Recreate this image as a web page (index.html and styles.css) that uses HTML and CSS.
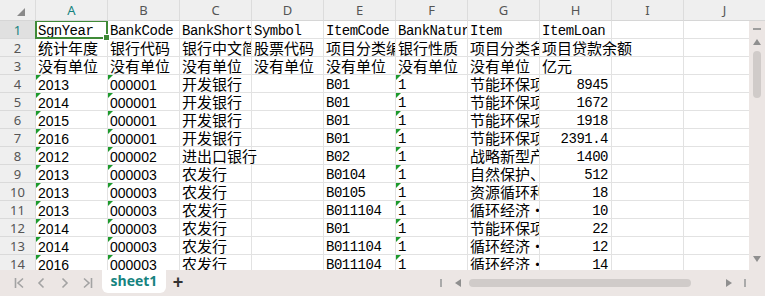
FILE: index.html
```html
<!DOCTYPE html>
<html>
<head>
    <title>sheet1</title>
    <link rel="stylesheet" href="styles.css">
</head>
<body>
<div class="book">
    <div class="colhead">
        <div class="corner"><svg width="8" height="8" viewBox="0 0 8 8"><polygon points="8,0 8,8 0,8" fill="#8a8a8a"/></svg></div>
        <div class="ch sel">A</div>
        <div class="ch">B</div>
        <div class="ch">C</div>
        <div class="ch">D</div>
        <div class="ch">E</div>
        <div class="ch">F</div>
        <div class="ch">G</div>
        <div class="ch">H</div>
        <div class="ch">I</div>
        <div class="ch">J</div>
    </div>

    <div class="body">
        <div class="grid">
            <div class="row">
                <div class="rh sel">1</div>
                <div class="c m active">SgnYear</div>
                <div class="c m">BankCode</div>
                <div class="c m">BankShort</div>
                <div class="c m">Symbol</div>
                <div class="c m">ItemCode</div>
                <div class="c m">BankNature</div>
                <div class="c m">Item</div>
                <div class="c m">ItemLoan</div>
                <div class="c"></div>
                <div class="c"></div>
            </div>
            <div class="row">
                <div class="rh">2</div>
                <div class="c">统计年度</div>
                <div class="c">银行代码</div>
                <div class="c">银行中文简称</div>
                <div class="c">股票代码</div>
                <div class="c">项目分类编号</div>
                <div class="c">银行性质</div>
                <div class="c">项目分类名称</div>
                <div class="c spill">项目贷款余额</div>
                <div class="c"></div>
                <div class="c"></div>
            </div>
            <div class="row">
                <div class="rh">3</div>
                <div class="c">没有单位</div>
                <div class="c">没有单位</div>
                <div class="c">没有单位</div>
                <div class="c">没有单位</div>
                <div class="c">没有单位</div>
                <div class="c">没有单位</div>
                <div class="c">没有单位</div>
                <div class="c">亿元</div>
                <div class="c"></div>
                <div class="c"></div>
            </div>
            <div class="row">
                <div class="rh">4</div>
                <div class="c t">2013</div>
                <div class="c t">000001</div>
                <div class="c">开发银行</div>
                <div class="c"></div>
                <div class="c m">B01</div>
                <div class="c m tri">1</div>
                <div class="c">节能环保项目</div>
                <div class="c m n">8945</div>
                <div class="c"></div>
                <div class="c"></div>
            </div>
            <div class="row">
                <div class="rh">5</div>
                <div class="c t">2014</div>
                <div class="c t">000001</div>
                <div class="c">开发银行</div>
                <div class="c"></div>
                <div class="c m">B01</div>
                <div class="c m tri">1</div>
                <div class="c">节能环保项目</div>
                <div class="c m n">1672</div>
                <div class="c"></div>
                <div class="c"></div>
            </div>
            <div class="row">
                <div class="rh">6</div>
                <div class="c t">2015</div>
                <div class="c t">000001</div>
                <div class="c">开发银行</div>
                <div class="c"></div>
                <div class="c m">B01</div>
                <div class="c m tri">1</div>
                <div class="c">节能环保项目</div>
                <div class="c m n">1918</div>
                <div class="c"></div>
                <div class="c"></div>
            </div>
            <div class="row">
                <div class="rh">7</div>
                <div class="c t">2016</div>
                <div class="c t">000001</div>
                <div class="c">开发银行</div>
                <div class="c"></div>
                <div class="c m">B01</div>
                <div class="c m tri">1</div>
                <div class="c">节能环保项目</div>
                <div class="c m n">2391.4</div>
                <div class="c"></div>
                <div class="c"></div>
            </div>
            <div class="row">
                <div class="rh">8</div>
                <div class="c t">2012</div>
                <div class="c t">000002</div>
                <div class="c spill">进出口银行</div>
                <div class="c"></div>
                <div class="c m">B02</div>
                <div class="c m tri">1</div>
                <div class="c">战略新型产业</div>
                <div class="c m n">1400</div>
                <div class="c"></div>
                <div class="c"></div>
            </div>
            <div class="row">
                <div class="rh">9</div>
                <div class="c t">2013</div>
                <div class="c t">000003</div>
                <div class="c">农发行</div>
                <div class="c"></div>
                <div class="c m">B0104</div>
                <div class="c m tri">1</div>
                <div class="c">自然保护、生态修复</div>
                <div class="c m n">512</div>
                <div class="c"></div>
                <div class="c"></div>
            </div>
            <div class="row">
                <div class="rh">10</div>
                <div class="c t">2013</div>
                <div class="c t">000003</div>
                <div class="c">农发行</div>
                <div class="c"></div>
                <div class="c m">B0105</div>
                <div class="c m tri">1</div>
                <div class="c">资源循环利用</div>
                <div class="c m n">18</div>
                <div class="c"></div>
                <div class="c"></div>
            </div>
            <div class="row">
                <div class="rh">11</div>
                <div class="c t">2013</div>
                <div class="c t">000003</div>
                <div class="c">农发行</div>
                <div class="c"></div>
                <div class="c m">B011104</div>
                <div class="c m tri">1</div>
                <div class="c">循环经济·工业</div>
                <div class="c m n">10</div>
                <div class="c"></div>
                <div class="c"></div>
            </div>
            <div class="row">
                <div class="rh">12</div>
                <div class="c t">2014</div>
                <div class="c t">000003</div>
                <div class="c">农发行</div>
                <div class="c"></div>
                <div class="c m">B01</div>
                <div class="c m tri">1</div>
                <div class="c">节能环保项目</div>
                <div class="c m n">22</div>
                <div class="c"></div>
                <div class="c"></div>
            </div>
            <div class="row">
                <div class="rh">13</div>
                <div class="c t">2014</div>
                <div class="c t">000003</div>
                <div class="c">农发行</div>
                <div class="c"></div>
                <div class="c m">B011104</div>
                <div class="c m tri">1</div>
                <div class="c">循环经济·工业</div>
                <div class="c m n">12</div>
                <div class="c"></div>
                <div class="c"></div>
            </div>
            <div class="row">
                <div class="rh">14</div>
                <div class="c t">2016</div>
                <div class="c t">000003</div>
                <div class="c">农发行</div>
                <div class="c"></div>
                <div class="c m">B011104</div>
                <div class="c m tri">1</div>
                <div class="c">循环经济·工业</div>
                <div class="c m n">14</div>
                <div class="c"></div>
                <div class="c"></div>
            </div>
        </div>

        <div class="vscroll">
            <div class="vdash"></div>
            <svg class="varrow" width="8" height="6" viewBox="0 0 8 6"><polygon points="4,0 8,6 0,6" fill="#8f8f8f"/></svg>
            <div class="vthumb"></div>
            <svg class="varrow down" width="8" height="6" viewBox="0 0 8 6"><polygon points="0,0 8,0 4,6" fill="#8f8f8f"/></svg>
        </div>
    </div>

    <div class="tabbar">
        <div class="nav">
            <svg width="10" height="12" viewBox="0 0 10 12"><path d="M1.5 1v10M9 1.5L4 6l5 4.5" fill="none" stroke="#a3a3a3" stroke-width="1.6"/></svg>
            <svg width="8" height="12" viewBox="0 0 8 12"><path d="M6.5 1.5L2 6l4.5 4.5" fill="none" stroke="#a3a3a3" stroke-width="1.6"/></svg>
            <svg width="8" height="12" viewBox="0 0 8 12"><path d="M1.5 1.5L6 6l-4.5 4.5" fill="none" stroke="#a3a3a3" stroke-width="1.6"/></svg>
            <svg width="10" height="12" viewBox="0 0 10 12"><path d="M1 1.5L6 6l-5 4.5M8.5 1v10" fill="none" stroke="#a3a3a3" stroke-width="1.6"/></svg>
        </div>
        <div class="tab">sheet1</div>
        <div class="add">+</div>
        <div class="hscroll">
            <div class="hbar"></div>
            <svg width="6" height="8" viewBox="0 0 6 8"><polygon points="6,0 6,8 0,4" fill="#8f8f8f"/></svg>
            <div class="hthumb"></div>
            <svg width="6" height="8" viewBox="0 0 6 8"><polygon points="0,0 6,4 0,8" fill="#8f8f8f"/></svg>
            <div class="hbar"></div>
        </div>
    </div>
</div>
</body>
</html>
```

FILE: styles.css
```css
html, body {
    margin: 0;
    padding: 0;
    background: #ffffff;
}
.book {
    width: 765px;
    height: 296px;
    overflow: hidden;
    display: flex;
    flex-direction: column;
}

/* column letters */
.colhead {
    display: grid;
    grid-template-columns: 36px repeat(9, 72px) 81px;
    height: 21px;
    flex: none;
    background: #efefef;
}
.corner, .ch {
    box-sizing: border-box;
    border-right: 1px solid #dcdcdc;
    border-bottom: 1px solid #d6d6d6;
    display: flex;
    align-items: center;
    justify-content: center;
    font-family: "Noto Sans", "Liberation Sans", sans-serif;
    font-size: 13px;
    color: #555555;
}
.corner {
    padding: 3px 0 0 6px;
}
.ch:last-child {
    border-right: none;
}
.ch.sel {
    color: #15837f;
}

.body {
    flex: 1;
    display: flex;
    min-height: 0;
}
.grid {
    width: 749px;
    overflow: hidden;
}
.row {
    display: grid;
    grid-template-columns: 36px repeat(9, 72px) 65px;
    height: 18px;
}
.rh, .c {
    box-sizing: border-box;
    height: 18px;
    border-right: 1px solid #e2e2e2;
    border-bottom: 1px solid #e2e2e2;
}
.rh {
    background: #efefef;
    border-color: #dadada;
    text-align: center;
    font-family: "Noto Sans", "Liberation Sans", sans-serif;
    font-size: 13px;
    line-height: 18px;
    color: #555555;
}
.rh.sel {
    background: #e0e0e0;
    color: #15837f;
}
.c {
    position: relative;
    padding: 0 2px;
    white-space: nowrap;
    overflow: hidden;
    font-family: "Noto Sans CJK SC", sans-serif;
    font-size: 15px;
    line-height: 18px;
    color: #000000;
}
.c:last-child {
    border-right: none;
}
.c.m {
    font-family: "Liberation Mono", "Noto Sans CJK SC", monospace;
    font-size: 14px;
    letter-spacing: -0.5px;
    line-height: 20px;
}
.c.t {
    font-family: "Liberation Sans", Arial, sans-serif;
    font-size: 14px;
    line-height: 20px;
}
.c.n {
    text-align: right;
    padding-right: 3px;
}
.c.spill {
    overflow: visible;
    z-index: 1;
}

/* text-stored numbers get the little green corner */
.c.t::before, .c.tri::before {
    content: "";
    position: absolute;
    left: 0;
    top: 0;
    border-top: 5px solid #1d9a2c;
    border-right: 5px solid transparent;
}

/* active cell A1 */
.c.active {
    overflow: visible;
}
.c.active::after {
    content: "";
    position: absolute;
    left: -1px;
    top: -1px;
    right: -1px;
    bottom: -1px;
    border: 2px solid #3f8a37;
    pointer-events: none;
}
.c.active::before {
    content: "";
    position: absolute;
    right: -3px;
    bottom: -3px;
    width: 5px;
    height: 5px;
    background: #3f8a37;
    border: 1px solid #ffffff;
    z-index: 2;
}

/* vertical scrollbar */
.vscroll {
    width: 16px;
    background: #ece6e4;
    display: flex;
    flex-direction: column;
    align-items: center;
    padding-top: 7px;
    padding-bottom: 8px;
    box-sizing: border-box;
}
.vdash {
    width: 8px;
    height: 2px;
    background: #9e9e9e;
}
.varrow {
    margin-top: 9px;
}
.vthumb {
    margin-top: 6px;
    width: 8px;
    height: 47px;
    border-radius: 4px;
    background: #d0cbc9;
}
.varrow.down {
    margin-top: auto;
}

/* sheet tabs */
.tabbar {
    height: 26px;
    flex: none;
    background: #ece6e4;
    display: flex;
    align-items: flex-start;
}
.nav {
    width: 102px;
    height: 26px;
    display: flex;
    align-items: center;
    padding-left: 14px;
    box-sizing: border-box;
    gap: 13px;
}
.nav svg:nth-child(3) {
    margin-left: 3px;
}
.nav svg:nth-child(4) {
    margin-left: 1px;
}
.tab {
    width: 64px;
    height: 23px;
    background: #ffffff;
    border-radius: 0 0 6px 6px;
    text-align: center;
    font-family: "Open Sans", "Noto Sans", sans-serif;
    font-weight: bold;
    font-size: 14px;
    line-height: 22px;
    color: #16837f;
}
.add {
    width: 20px;
    margin-left: 2px;
    text-align: center;
    font-family: "Liberation Sans", Arial, sans-serif;
    font-weight: bold;
    font-size: 18px;
    line-height: 25px;
    color: #333333;
}
.hscroll {
    margin-left: auto;
    height: 26px;
    display: flex;
    align-items: center;
    padding-right: 19px;
    gap: 0;
}
.hbar {
    width: 2px;
    height: 8px;
    background: #aaaaaa;
}
.hscroll svg:nth-of-type(1) {
    margin-left: 13px;
}
.hthumb {
    width: 222px;
    height: 8px;
    margin-left: 8px;
    border-radius: 4px;
    background: #d0cbc9;
}
.hscroll svg:nth-of-type(2) {
    margin-left: 35px;
    margin-right: 12px;
}
```
